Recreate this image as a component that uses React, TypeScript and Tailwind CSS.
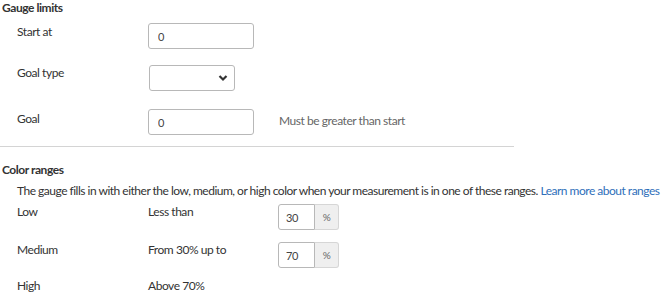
import React from 'react';

function TextField({ value, width }: { value: string; width: string }) {
  return (
    <input
      defaultValue={value}
      className={`${width} h-[26px] rounded-[3px] border border-[#b8b8b8] bg-white px-[9px] text-[11px] text-[#444] focus:outline-none`}
    />
  );
}

function PercentField({ value }: { value: string }) {
  return (
    <div className="flex h-[26px]">
      <input
        defaultValue={value}
        className="h-full w-[37px] rounded-l-[3px] border border-[#b8b8b8] bg-white px-[7px] text-[11px] text-[#444] focus:outline-none"
      />
      <div className="flex h-full w-[24px] items-center justify-center rounded-r-[3px] border border-l-0 border-[#d6d6d6] bg-[#efefef] text-[10px] text-[#666]">
        %
      </div>
    </div>
  );
}

function App() {
  return (
    <div
      className="h-[296px] w-[670px] overflow-hidden bg-white text-[12px] tracking-[-0.45px] text-[#333]"
      style={{ fontFamily: 'Lato, "Noto Sans", sans-serif' }}>
      <div className="pl-[2px]">
        <h2 className="text-[12px] font-bold leading-[16px]">Gauge limits</h2>
      </div>

      <div className="mt-[7px] flex flex-col gap-[16px] pl-[17px]">
        <div className="flex items-start">
          <label className="w-[131px] pt-[1px] leading-[16px]">Start at</label>
          <TextField value="0" width="w-[106px]" />
        </div>
        <div className="flex items-start">
          <label className="w-[132px] leading-[16px]">Goal type</label>
          <div className="relative">
            <select className="h-[26px] w-[86px] appearance-none rounded-[3px] border border-[#b8b8b8] bg-white focus:outline-none" />
            <svg
              className="pointer-events-none absolute right-[7px] top-[9px]"
              width="10"
              height="8"
              viewBox="0 0 10 8">
              <path d="M1.5 2 L5 5.5 L8.5 2" stroke="#333" strokeWidth="2.2" fill="none" />
            </svg>
          </div>
        </div>
        <div className="mt-[2px] flex items-start">
          <label className="w-[131px] pt-[2px] leading-[16px]">Goal</label>
          <TextField value="0" width="w-[106px]" />
          <span className="ml-[25px] pt-[4px] leading-[16px] text-[#666]">Must be greater than start</span>
        </div>
      </div>

      <hr className="mt-[11px] w-[514px] border-t border-[#d4d4d4]" />

      <div className="mt-[15px] pl-[2px]">
        <h2 className="text-[12px] font-bold leading-[16px]">Color ranges</h2>
      </div>
      <div className="pl-[17px]">
        <p className="mt-[5px] whitespace-nowrap leading-[16px] tracking-[-0.5px]">
          The gauge fills in with either the low, medium, or high color when your measurement is in one of these ranges.{' '}
          <a href="#" className="text-[#2f6fba]">
            Learn more about ranges
          </a>
        </p>

        <div className="mt-[5px] flex flex-col gap-[12px]">
          <div className="flex items-start">
            <span className="w-[131px] leading-[16px]">Low</span>
            <span className="w-[130px] leading-[16px]">Less than</span>
            <PercentField value="30" />
          </div>
          <div className="flex items-start">
            <span className="w-[131px] leading-[16px]">Medium</span>
            <span className="w-[130px] leading-[16px]">From 30% up to</span>
            <PercentField value="70" />
          </div>
        </div>
        <div className="mt-[10px] flex items-start">
          <span className="w-[131px] leading-[16px]">High</span>
          <span className="w-[130px] leading-[16px]">Above 70%</span>
        </div>
      </div>
    </div>
  );
}

export default App;
